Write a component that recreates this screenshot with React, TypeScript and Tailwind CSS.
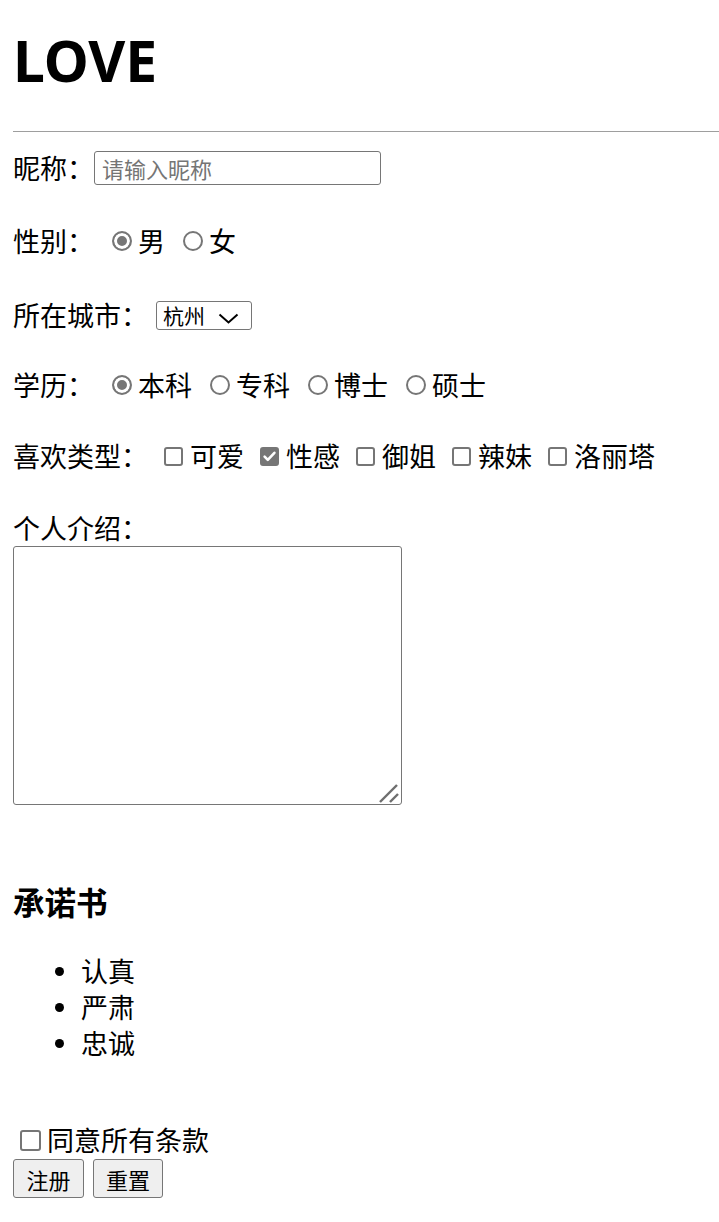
import React from 'react';

const Radio = ({ name, checked }: { name: string; checked?: boolean }) => (
  <input
    type="radio"
    name={name}
    defaultChecked={checked}
    className="appearance-none m-0 w-[20px] h-[20px] shrink-0 rounded-full border-2 border-[#767676] bg-white checked:bg-[#767676] checked:shadow-[inset_0_0_0_3px_white]"
  />
);

const Check = ({ checked, size = 'w-[19px] h-[19px]' }: { checked?: boolean; size?: string }) => (
  <span className={`relative inline-flex shrink-0 ${size}`}>
    <input
      type="checkbox"
      defaultChecked={checked}
      className="peer appearance-none m-0 w-full h-full rounded-[3px] border-2 border-[#767676] bg-white checked:bg-[#767676]"
    />
    <svg className="absolute inset-0 w-full h-full hidden peer-checked:block pointer-events-none" viewBox="0 0 19 19">
      <path d="M4.6 9.6 L7.8 12.8 L14.4 5.8" stroke="white" strokeWidth="2.6" fill="none" strokeLinecap="round" strokeLinejoin="round" />
    </svg>
  </span>
);

const Option = ({ children, first, type, name, checked }: { children: React.ReactNode; first?: boolean; type: 'radio' | 'check'; name?: string; checked?: boolean }) => (
  <label className={`flex items-center ${first ? '' : type === 'radio' ? 'ml-[18px]' : 'ml-[16px]'}`}>
    {type === 'radio' ? <Radio name={name || ''} checked={checked} /> : <Check checked={checked} />}
    <span className={type === 'radio' ? 'ml-[6px]' : 'ml-[7px]'}>{children}</span>
  </label>
);

export default function App() {
  const degrees = ['本科', '专科', '博士', '硕士'];
  const types = ['可爱', '性感', '御姐', '辣妹', '洛丽塔'];
  const pledges = ['认真', '严肃', '忠诚'];

  return (
    <div className="min-h-screen bg-white text-black pl-[13px] pb-[20px] font-['Noto_Sans_CJK_SC','Noto_Sans',sans-serif] text-[27px] leading-[36px]">
      <h1 className="mt-[24px] font-['Noto_Sans','Noto_Sans_CJK_SC',sans-serif] text-[57px] leading-[72px] font-bold">LOVE</h1>
      <div className="mt-[35px] h-px bg-[#9e9e9e]" />

      <form onSubmit={(e) => e.preventDefault()}>
        <div className="mt-[18px] h-[36px] flex items-center">
          <span className="w-[81px]">昵称：</span>
          <input
            type="text"
            placeholder="请输入昵称"
            className="w-[287px] h-[34px] border border-[#767676] rounded-[3px] px-[7px] text-[22px] leading-[30px] placeholder:text-[#757575] outline-none"
          />
        </div>

        <div className="mt-[37px] h-[36px] flex items-center">
          <span className="w-[81px]">性别：</span>
          <div className="ml-[18px] flex items-center">
            <Option type="radio" name="sex" first checked>男</Option>
            <Option type="radio" name="sex">女</Option>
          </div>
        </div>

        <div className="mt-[38px] h-[36px] flex items-center">
          <span className="w-[135px]">所在城市：</span>
          <span className="relative ml-[8px] inline-flex">
            <select
              defaultValue="杭州"
              className="appearance-none w-[96px] h-[29px] border border-[#767676] rounded-[3px] pl-[6px] text-[21px] leading-[27px] bg-white outline-none"
            >
              <option>北京</option>
              <option>上海</option>
              <option>杭州</option>
            </select>
            <svg className="absolute right-[13px] top-[12px] pointer-events-none" width="21" height="11" viewBox="0 0 21 11">
              <path d="M1.5 1.5 L10.5 9.5 L19.5 1.5" stroke="black" strokeWidth="2" fill="none" />
            </svg>
          </span>
        </div>

        <div className="mt-[34px] h-[36px] flex items-center">
          <span className="w-[81px]">学历：</span>
          <div className="ml-[18px] flex items-center">
            {degrees.map((d, i) => (
              <Option key={d} type="radio" name="degree" first={i === 0} checked={i === 0}>{d}</Option>
            ))}
          </div>
        </div>

        <div className="mt-[35px] h-[36px] flex items-center">
          <span className="w-[135px]">喜欢类型：</span>
          <div className="ml-[16px] flex items-center">
            {types.map((t, i) => (
              <Option key={t} type="check" first={i === 0} checked={i === 1}>{t}</Option>
            ))}
          </div>
        </div>

        <div className="mt-[36px] h-[36px]">个人介绍：</div>
        <div className="relative w-[389px]">
          <textarea className="block w-[389px] h-[259px] border border-[#767676] rounded-[3px] resize-none outline-none" />
          <svg className="absolute right-0 bottom-0 pointer-events-none" width="26" height="24" viewBox="0 0 26 24">
            <path d="M4 21 L21 4" stroke="#6e6e6e" strokeWidth="2.4" />
            <path d="M14 21 L22 13" stroke="#6e6e6e" strokeWidth="2.4" />
          </svg>
        </div>

        <h3 className="mt-[75px] h-[42px] flex items-center text-[31.5px] font-bold">承诺书</h3>
        <ul className="mt-[31px]">
          {pledges.map((p) => (
            <li key={p} className="h-[36px] flex items-center">
              <span className="ml-[42px] w-[9px] h-[9px] rounded-full bg-black" />
              <span className="ml-[17px]">{p}</span>
            </li>
          ))}
        </ul>

        <label className="mt-[61px] h-[36px] flex items-center">
          <span className="ml-[7px] flex">
            <Check size="w-[21px] h-[21px]" />
          </span>
          <span className="ml-[6px]">同意所有条款</span>
        </label>
        <div className="mt-px flex items-center gap-[9px]">
          <button type="submit" className="w-[71px] h-[39px] bg-[#efefef] border-[1.5px] border-[#767676] rounded-[3px] text-[22px] leading-[30px]">注册</button>
          <button type="reset" className="w-[70px] h-[39px] bg-[#efefef] border-[1.5px] border-[#767676] rounded-[3px] text-[22px] leading-[30px]">重置</button>
        </div>
      </form>
    </div>
  );
}
